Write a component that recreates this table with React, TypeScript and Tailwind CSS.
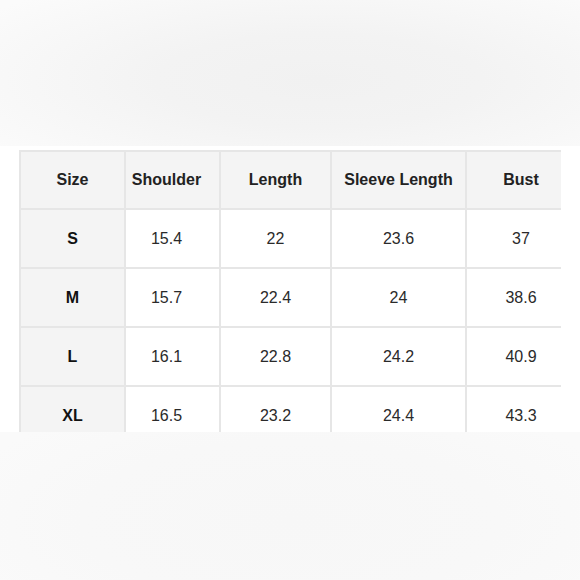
import React from "react";

const headers = ["Size", "Shoulder", "Length", "Sleeve Length", "Bust"];
const rows = [
  ["S", "15.4", "22", "23.6", "37"],
  ["M", "15.7", "22.4", "24", "38.6"],
  ["L", "16.1", "22.8", "24.2", "40.9"],
  ["XL", "16.5", "23.2", "24.4", "43.3"],
];

const colPad = ["", "pr-[12px]", "", "", "pl-[14px]"];

export default function App() {
  return (
    <div
      className="w-[580px] h-[580px] flex flex-col bg-white overflow-hidden"
      style={{ fontFamily: '"Liberation Sans", Arial, sans-serif' }}
    >
      <div className="h-[146px] shrink-0 bg-[radial-gradient(ellipse_70%_80%_at_55%_55%,#f1f1f1_0%,#f3f3f3_40%,#fbfbfb_100%)]" />
      <div className="h-[4px] shrink-0 bg-white" />
      <div className="h-[282px] shrink-0 bg-white overflow-hidden pl-[19px]">
        <div className="w-[542px] border-t-2 border-l-2 border-[#e6e6e6] grid grid-cols-[105px_95px_111px_135px_94px]">
          {headers.map((h, i) => (
            <div
              key={h}
              className={`h-[58px] flex items-center justify-center bg-[#f4f4f4] border-b-2 border-[#e6e6e6] text-[16px] font-bold text-[#222] ${
                i < 4 ? "border-r-2" : ""
              } ${colPad[i]}`}
            >
              {h}
            </div>
          ))}
          {rows.map((r) =>
            r.map((c, i) => (
              <div
                key={r[0] + i}
                className={`h-[59px] flex items-center justify-center border-b-2 border-[#e6e6e6] text-[16px] pt-[1px] ${
                  i === 0 ? "bg-[#f4f4f4] font-bold text-[#111]" : "bg-white text-[#2a2a2a]"
                } ${i < 4 ? "border-r-2" : ""} ${colPad[i]}`}
              >
                {c}
              </div>
            ))
          )}
        </div>
      </div>
      <div className="flex-1 bg-[radial-gradient(ellipse_60%_90%_at_50%_60%,#f7f7f7_0%,#f8f8f8_60%,#fafafa_100%)]" />
    </div>
  );
}
